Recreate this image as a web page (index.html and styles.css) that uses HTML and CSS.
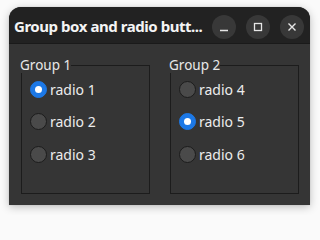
FILE: index.html
```html
<!DOCTYPE html>
<html>
<head>
<meta charset="utf-8">
<link rel="stylesheet" href="styles.css">
</head>
<body>
<div class="window">
  <div class="titlebar">
    <div class="title">Group box and radio butt...</div>
    <div class="buttons">
      <div class="wbtn"><svg width="24" height="24" viewBox="0 0 24 24"><path d="M8 15.5h8" stroke="#e6e6e6" stroke-width="1.4"/></svg></div>
      <div class="wbtn"><svg width="24" height="24" viewBox="0 0 24 24"><rect x="8.5" y="8.5" width="7" height="7" fill="none" stroke="#e6e6e6" stroke-width="1.3"/></svg></div>
      <div class="wbtn"><svg width="24" height="24" viewBox="0 0 24 24"><path d="M8.5 8.5l7 7M15.5 8.5l-7 7" stroke="#e6e6e6" stroke-width="1.4"/></svg></div>
    </div>
  </div>
  <div class="content">
    <fieldset class="group">
      <legend class="glabel">Group 1</legend>
      <div class="row"><span class="radio checked"></span><span class="rtext">radio 1</span></div>
      <div class="row"><span class="radio"></span><span class="rtext">radio 2</span></div>
      <div class="row"><span class="radio"></span><span class="rtext">radio 3</span></div>
    </fieldset>
    <fieldset class="group">
      <legend class="glabel">Group 2</legend>
      <div class="row"><span class="radio"></span><span class="rtext">radio 4</span></div>
      <div class="row"><span class="radio checked"></span><span class="rtext">radio 5</span></div>
      <div class="row"><span class="radio"></span><span class="rtext">radio 6</span></div>
    </fieldset>
  </div>
</div>
</body>
</html>
```
FILE: styles.css
```css
html, body {
  margin: 0;
  padding: 0;
  background: #fafafa;
  width: 320px;
  height: 215px;
  overflow: hidden;
  font-family: "Noto Sans", "DejaVu Sans", sans-serif;
}
.window {
  margin: 7px 0 0 9px;
  width: 301px;
  height: 198px;
  border-radius: 12px 12px 0 0;
  background: #353535;
  box-shadow: 0 2px 8px rgba(0,0,0,0.25), 0 0 1px rgba(0,0,0,0.3);
  overflow: hidden;
  display: flex;
  flex-direction: column;
}
.titlebar {
  height: 37px;
  background: #222222;
  border-bottom: 1px solid #1a1a1a;
  box-sizing: border-box;
  display: flex;
  align-items: center;
  padding: 0 6px 0 5px;
}
.title {
  flex: 1;
  min-width: 0;
  white-space: nowrap;
  color: #f4f4f4;
  font-weight: bold;
  font-size: 15px;
  letter-spacing: -0.45px;
  margin-top: 1px;
  margin-right: 4px;
}
.buttons {
  display: flex;
  gap: 10px;
  margin-top: 3px;
}
.wbtn {
  width: 24px;
  height: 24px;
  border-radius: 50%;
  background: #383838;
}
.wbtn svg { display: block; }
.content {
  display: flex;
  gap: 20px;
  padding: 13px 11px 0 12px;
}
.group {
  margin: 0;
  width: 129px;
  height: 137px;
  box-sizing: border-box;
  border: 1px solid #1c1c1c;
  padding: 0 0 0 8px;
  min-width: 0;
}
.glabel {
  padding: 0;
  margin-left: -10px;
  color: #e8e8e8;
  font-size: 13.5px;
  line-height: 16px;
}
.row {
  height: 32.5px;
  display: flex;
  align-items: center;
}
.radio {
  width: 17px;
  height: 17px;
  box-sizing: border-box;
  border-radius: 50%;
  background: #4a4a4a;
  border: 1px solid #1c1c1c;
  margin-right: 3px;
  position: relative;
  flex: none;
}
.radio.checked {
  background: #1c78e6;
  border-color: #1c78e6;
}
.radio.checked::after {
  content: "";
  position: absolute;
  left: 4px;
  top: 4px;
  width: 7px;
  height: 7px;
  border-radius: 50%;
  background: #ffffff;
}
.rtext {
  color: #ececec;
  font-size: 14px;
}
```
